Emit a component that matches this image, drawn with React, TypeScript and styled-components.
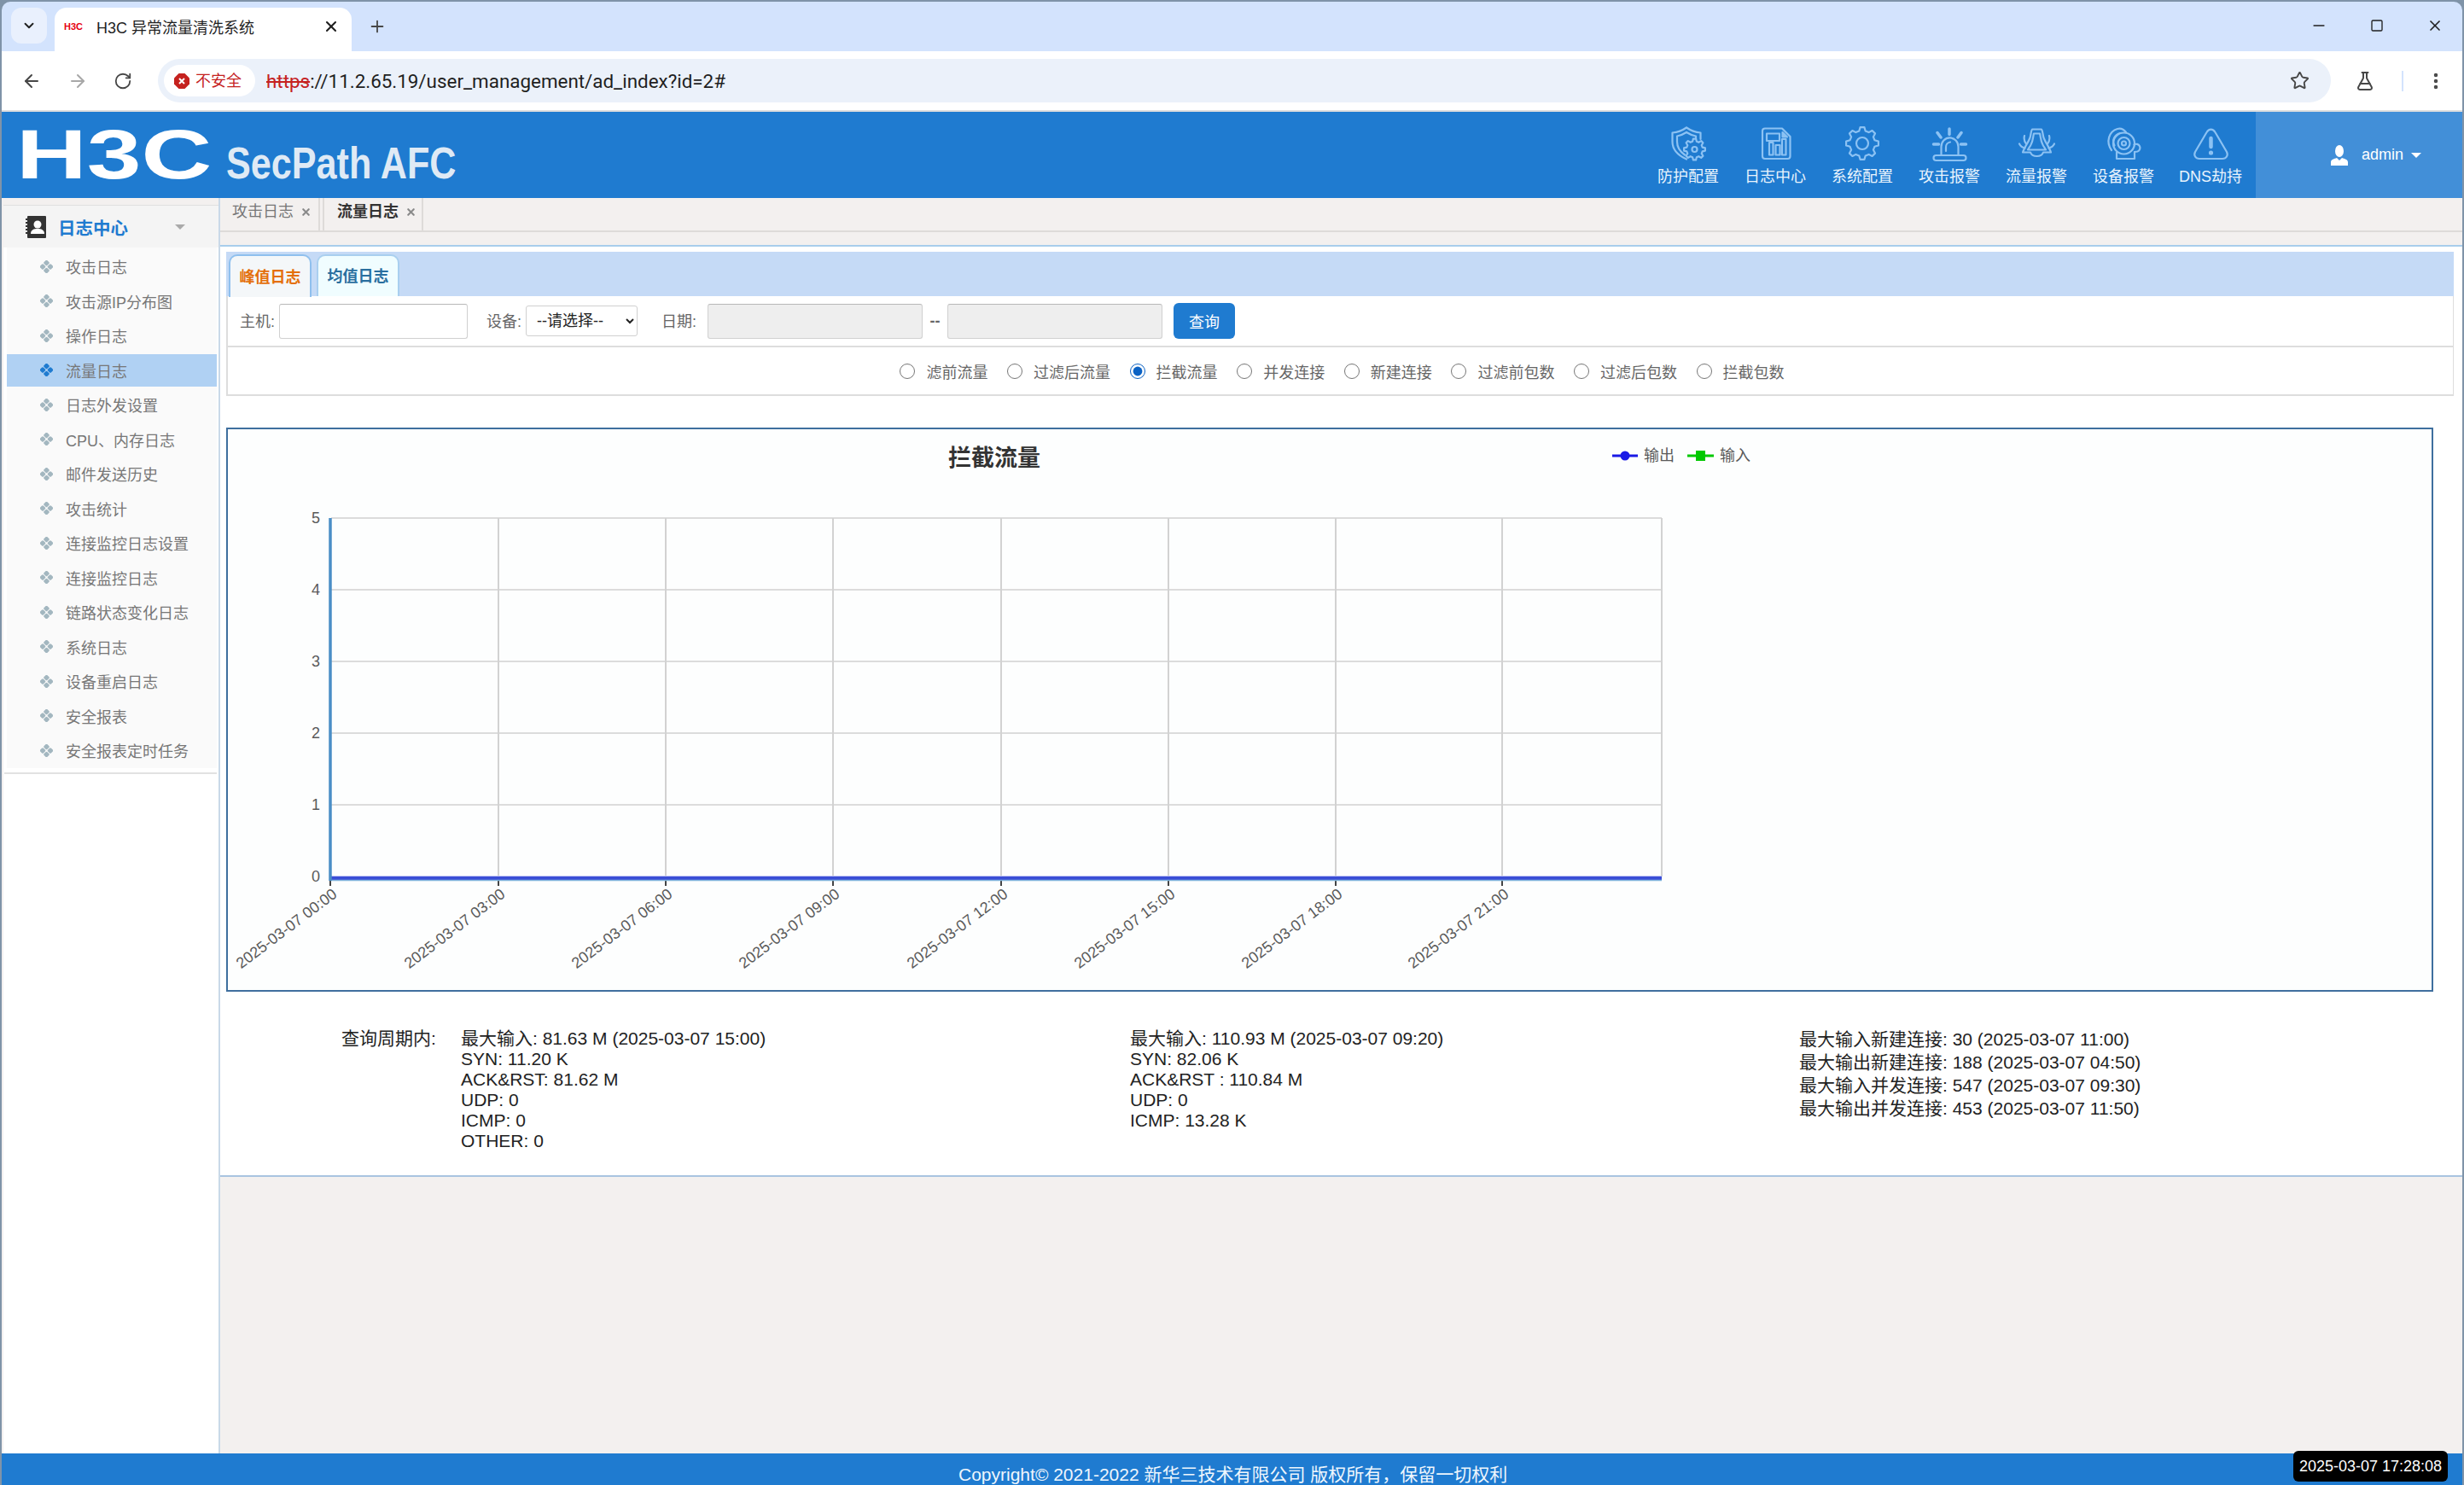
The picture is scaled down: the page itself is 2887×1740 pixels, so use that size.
import React from 'react';
import styled, { createGlobalStyle } from 'styled-components';
import { ArrowLeft, ArrowRight, RotateCw, Star, FlaskConical, EllipsisVertical, ChevronDown, X, Plus, Minus, Square } from 'lucide-react';

const GlobalStyle = createGlobalStyle`
  html, body { margin: 0; padding: 0; background: #7f93a8; }
  body { font-family: "Liberation Sans", "Noto Sans CJK SC", sans-serif; overflow: hidden; }
  * { box-sizing: border-box; }
`;

const Frame = styled.div`
  height: 1740px;
  padding: 2px 2px 0;
  display: flex;
  flex-direction: column;
  position: relative;
`;

/* ---------- browser chrome ---------- */
const TabStrip = styled.div`
  height: 58px;
  background: #d3e3fd;
  border-radius: 10px 10px 0 0;
  display: flex;
  align-items: flex-start;
  padding: 7px 0 0 11px;
  color: #1f1f1f;
`;

const TabListButton = styled.div`
  width: 42px;
  height: 42px;
  border-radius: 12px;
  background: #e9f0fd;
  display: flex;
  align-items: center;
  justify-content: center;
`;

const BrowserTab = styled.div`
  width: 348px;
  height: 51px;
  margin-left: 9px;
  background: #fff;
  border-radius: 14px 14px 0 0;
  display: flex;
  align-items: center;
  padding: 0 14px 8px 11px;
  font-size: 18px;
`;

const Favicon = styled.span`
  width: 38px;
  font-size: 11px;
  font-weight: bold;
  color: #e60012;
`;

const TabTitle = styled.span`
  flex: 1;
  white-space: nowrap;
`;

const NewTab = styled.div`
  margin: 11px 0 0 19px;
  line-height: 0;
`;

const WindowControls = styled.div`
  margin: 11px 0 0 auto;
  display: flex;
  align-items: center;
  gap: 50px;
  padding-right: 22px;
  line-height: 0;
`;

const Toolbar = styled.div`
  height: 71px;
  background: #fff;
  border-bottom: 2px solid #dedede;
  display: flex;
  align-items: flex-start;
  padding: 9px 0 0;
  color: #474747;
`;

const NavButtons = styled.div`
  width: 183px;
  height: 51px;
  padding-left: 23px;
  display: flex;
  align-items: center;
  gap: 30px;
`;

const Omnibox = styled.div`
  width: 2546px;
  height: 51px;
  flex: none;
  border-radius: 26px;
  background: #ebf1fa;
  display: flex;
  align-items: center;
  padding: 0 25px 0 7px;
`;

const SecurityChip = styled.div`
  width: 107px;
  height: 37px;
  flex: none;
  border-radius: 19px;
  background: #fff;
  display: flex;
  align-items: center;
  gap: 7px;
  padding-left: 12px;
  font-size: 18px;
  line-height: 20px;
  color: #c5221f;
  white-space: nowrap;
`;

const Url = styled.div`
  margin-left: 13px;
  font-size: 22.4px;
  font-family: "Roboto", sans-serif;
  color: #1f1f1f;
  flex: 1;
  white-space: nowrap;
`;

const UrlScheme = styled.span`
  color: #c5221f;
  text-decoration: line-through;
`;

const ToolbarEnd = styled.div`
  display: flex;
  align-items: center;
  height: 51px;
  line-height: 0;
  padding-left: 28px;
`;

const ToolbarDivider = styled.div`
  width: 2px;
  height: 24px;
  background: #d3e3fd;
  margin: 0 26px 0 31px;
`;

/* ---------- app header ---------- */
const Header = styled.header`
  height: 101px;
  background: #1f7bd0;
  display: flex;
`;

const Logo = styled.div`
  padding: 10px 0 0 17px;
  display: flex;
  align-items: baseline;
  font-weight: bold;
  line-height: 1;
  white-space: nowrap;
  font-family: "Liberation Sans", sans-serif;
`;

const LogoMark = styled.span`
  font-size: 81px;
  color: #fff;
  transform: scaleX(1.415);
  transform-origin: left;
  margin-right: 84px;
`;

const LogoName = styled.span`
  font-size: 52px;
  color: #dfeaf5;
  transform: scaleX(0.83);
  transform-origin: left;
`;

const TopNav = styled.nav`
  margin-left: auto;
  display: flex;
`;

const TopNavItem = styled.div`
  width: 102px;
  padding-top: 15px;
  display: flex;
  flex-direction: column;
  align-items: center;
  gap: 5px;
  color: #eaf4fd;
  font-size: 18px;
  line-height: 24px;
  white-space: nowrap;
  svg { width: 44px; height: 44px; fill: none; stroke: #8cc2f3; stroke-width: 2.2; stroke-linejoin: round; stroke-linecap: round; }
`;

const AdminBox = styled.div`
  width: 242px;
  margin-left: 2px;
  background: #428fd8;
  display: flex;
  align-items: center;
  padding: 0 0 0 88px;
  color: #fff;
  font-size: 18px;
`;

const AdminName = styled.span`
  margin: 0 9px 0 16px;
`;

const Caret = styled.span<{ $color: string; $size: number }>`
  display: block;
  width: 0;
  height: 0;
  border-left: ${p => p.$size}px solid transparent;
  border-right: ${p => p.$size}px solid transparent;
  border-top: ${p => p.$size}px solid ${p => p.$color};
`;

/* ---------- body ---------- */
const Main = styled.div`
  flex: 1;
  min-height: 0;
  display: flex;
  background: #f3f0ef;
`;

const Sidebar = styled.aside`
  width: 254px;
  flex: none;
  margin-left: 2px;
  padding-top: 8px;
  border-right: 2px solid #c9d9e8;
  display: flex;
  flex-direction: column;
`;

const SideHead = styled.div`
  height: 50px;
  flex: none;
  border-top: 1px solid #e0e0e0;
  background: #f4f4f4;
  display: flex;
  align-items: center;
  padding-left: 26px;
  font-size: 20.5px;
  font-weight: bold;
  color: #1f7bd0;
  gap: 14px;
`;

const SideCaret = styled.span`
  margin-left: 41px;
`;

const SideBody = styled.div`
  flex: 1;
  background: #fff;
`;

const SideList = styled.ul`
  list-style: none;
  margin: 0 0 0 4px;
  width: 246px;
  padding: 2px 0 0;
  background: #fafafa;
  height: 610px;
`;

const SideItem = styled.li`
  height: 40.5px;
  display: flex;
  align-items: center;
`;

const SideItemRow = styled.div<{ $active?: boolean }>`
  width: 100%;
  height: 38px;
  display: flex;
  align-items: center;
  gap: 15px;
  padding-left: 39px;
  font-size: 18px;
  color: #777;
  background: ${p => (p.$active ? '#b0d1f3' : 'transparent')};
  svg { width: 15px; height: 15px; flex: none; fill: ${p => (p.$active ? '#1f7bd0' : '#a3b7c0')}; }
`;

const SideRule = styled.div`
  height: 2px;
  margin: 5px 0 0 1px;
  width: 249px;
  background: #e2e2e2;
`;

const Content = styled.div`
  flex: 1;
  min-width: 0;
  display: flex;
  flex-direction: column;
`;

const PageTabs = styled.div`
  height: 40px;
  flex: none;
  margin-bottom: 15px;
  border-bottom: 2px solid #dedbd9;
  display: flex;
`;

const PageTab = styled.div<{ $active?: boolean }>`
  width: ${p => (p.$active ? 118 : 117)}px;
  height: 38px;
  padding: 4px 0 0 ${p => (p.$active ? 15 : 14)}px;
  display: flex;
  align-items: flex-start;
  gap: 8px;
  line-height: 24px;
  font-size: 18px;
  font-weight: ${p => (p.$active ? 'bold' : 'normal')};
  color: ${p => (p.$active ? '#333' : '#777')};
  border-right: 2px solid #dedbd9;
  & + & { margin-left: 3px; border-left: 2px solid #dedbd9; }
  svg { margin-top: 6px; color: #8a8a8a; }
`;

const Panel = styled.section`
  background: #fff;
  border-top: 2px solid #a8cdec;
  border-bottom: 2px solid #a9c4e0;
  padding: 6px 10px 0 7px;
  height: 1092px;
`;

const SubTabBar = styled.div`
  height: 52px;
  background: #c5daf6;
  display: flex;
  padding: 3px 0 0 3px;
  gap: 6px;
`;

const SubTab = styled.div<{ $active?: boolean }>`
  width: 97px;
  height: ${p => (p.$active ? 50 : 49)}px;
  padding-bottom: 3px;
  border: 2px solid ${p => (p.$active ? '#8fc0ee' : '#a9cfef')};
  border-bottom: 0;
  border-radius: 10px 10px 0 0;
  background: ${p => (p.$active ? '#f4f7f9' : '#f0fdff')};
  color: ${p => (p.$active ? '#e46f0a' : '#2a6f9f')};
  font-size: 18px;
  font-weight: bold;
  display: flex;
  align-items: center;
  justify-content: center;
`;

const FilterBox = styled.div`
  border: solid #ddd;
  border-width: 0 1px 2px 2px;
  height: 117px;
  display: flex;
  flex-direction: column;
`;

const FormRow = styled.div`
  height: 60px;
  border-bottom: 2px solid #ddd;
  display: flex;
  align-items: center;
  padding-left: 14px;
  font-size: 18px;
  color: #666;
`;

const FieldLabel = styled.label<{ $gap: number; $width: number }>`
  margin-left: ${p => p.$gap}px;
  margin-bottom: 3px;
  width: ${p => p.$width}px;
  white-space: nowrap;
`;

const TextInput = styled.input<{ $width: number }>`
  width: ${p => p.$width}px;
  height: 41px;
  border: 1px solid #d0d0d0;
  border-top-color: #b8b8b8;
  border-radius: 3px;
  background: #fff;
  padding: 0 8px;
  &:disabled { background: #eee; }
`;

const DeviceSelect = styled.select`
  width: 131px;
  height: 36px;
  border: 1px solid #d0d0d0;
  border-radius: 3px;
  background: #fff;
  padding-left: 8px;
  font-size: 18px;
  color: #222;
  font-family: "Liberation Sans", "Noto Sans CJK SC", sans-serif;
`;

const Dash = styled.span`
  width: 29px;
  text-align: center;
  font-weight: bold;
`;

const QueryButton = styled.button`
  width: 72px;
  height: 42px;
  margin-left: 13px;
  border: 0;
  border-radius: 6px;
  background: #1f7bd0;
  color: #fff;
  font-size: 18px;
  font-family: "Liberation Sans", "Noto Sans CJK SC", sans-serif;
`;

const RadioRow = styled.div`
  flex: 1;
  display: flex;
  align-items: center;
  justify-content: center;
  gap: 22.6px;
  padding-left: 4px;
  font-size: 18px;
  color: #666;
`;

const RadioLabel = styled.label`
  display: flex;
  align-items: center;
  gap: 13px;
  white-space: nowrap;
`;

const Radio = styled.input`
  width: 18px;
  height: 18px;
  margin: 0;
  accent-color: #0b62c4;
`;

const ChartBox = styled.div`
  margin: 37px 24px 0 0;
  height: 661px;
  border: 2px solid #3f6f9e;
  background: #fdfefe;
  line-height: 0;
`;

const ChartSvg = styled.svg`
  width: 2582px;
  height: 657px;
  font-family: "Liberation Sans", "Noto Sans CJK SC", sans-serif;
`;

const ChartTitle = styled.text`
  font-size: 27px;
  font-weight: bold;
  fill: #333;
`;

const ChartLabel = styled.text`
  font-size: 18px;
  fill: #5a5a5a;
`;

const Stats = styled.div`
  margin-top: 43px;
  padding-left: 135px;
  display: grid;
  grid-template-columns: 140px 784px 784px 1fr;
  font-size: 21px;
  color: #222;
`;

const StatColumn = styled.div<{ $lineHeight: number }>`
  line-height: ${p => p.$lineHeight}px;
  margin-top: ${p => (24 - p.$lineHeight) / 2}px;
  white-space: nowrap;
`;

const Footer = styled.footer`
  height: 37px;
  flex: none;
  background: #1f7bd0;
  color: #eef6fd;
  font-size: 21px;
  line-height: 37px;
  padding: 6px 0 0 1121px;
  overflow: hidden;
  white-space: nowrap;
`;

const Clock = styled.div`
  position: absolute;
  left: 2687px;
  top: 1700px;
  width: 181px;
  height: 36px;
  background: #000;
  border-radius: 6px;
  color: #fff;
  font-size: 18px;
  display: flex;
  align-items: center;
  justify-content: center;
`;

/* ---------- drawings ---------- */
const gearPath = (cx: number, cy: number, outer: number, inner: number, teeth: number) => {
  const points: string[] = [];
  const step = (Math.PI * 2) / teeth;
  for (let i = 0; i < teeth; i++) {
    const a = i * step - Math.PI / 2;
    const corners: [number, number][] = [
      [inner, a - step * 0.32],
      [outer, a - step * 0.16],
      [outer, a + step * 0.16],
      [inner, a + step * 0.32],
    ];
    corners.forEach(([r, t]) => {
      points.push(`${(cx + r * Math.cos(t)).toFixed(1)} ${(cy + r * Math.sin(t)).toFixed(1)}`);
    });
  }
  return `M${points.join('L')}z`;
};

const ShieldIcon = () => (
  <svg viewBox="0 0 44 44">
    <path d="M20 3.5C15 7 9 9 3.5 9.5V20C3.5 29 10 36 20 40.5M20 3.5C25 7 31 9 36.5 9.5V17" />
    <path d="M20 9C16 11.5 12 13 9 13.5V20C9 27 13 32 18 35.5M20 9C24 11.5 28 13 31 13.5V16" />
    <path d={gearPath(29.5, 29, 12.5, 9.5, 8)} />
    <circle cx="29.5" cy="29" r="3" />
  </svg>
);

const ReportIcon = () => (
  <svg viewBox="0 0 44 44">
    <path d="M10 4.5H30L39.5 14V37A3 3 0 0 1 36.5 40H10A3 3 0 0 1 7 37V7.5A3 3 0 0 1 10 4.5z" />
    <path d="M12 10.5H27V19H12zM15 21H19.5V35.5H15zM22.5 24H27.5V35.5H22.5zM30 17H34.5V35.5H30z" />
    <path d="M30.5 9L36 14.5H30.5z" fill="#8cc2f3" />
  </svg>
);

const GearIcon = () => (
  <svg viewBox="0 0 44 44">
    <path d={gearPath(22, 22, 19, 15, 8)} />
    <circle cx="22" cy="22" r="7" />
  </svg>
);

const SirenIcon = () => (
  <svg viewBox="0 0 44 44">
    <path d="M12.5 36V26A9.5 10 0 0 1 32.5 26V36" />
    <path d="M6.5 36H38.5A2 2 0 0 1 38.5 42H6.5A2 2 0 0 1 6.5 36z" />
    <path d="M18 31V27A6 6 0 0 1 23 20.5" />
    <path d="M22 5V11.5M8 9.5L12 15M36 9.5L32 15M3.5 23H9.5M35.5 23H41.5" strokeWidth="3.5" />
  </svg>
);

const BellIcon = () => (
  <svg viewBox="0 0 44 44">
    <path d="M17 5.5H28C30 8.5 29 12.5 31 16.5 33 21.5 37 26.5 39 32.5H30C28 38.5 17 38.5 15 32.5H6C8 26.5 12 21.5 14 16.5 16 12.5 15 8.5 17 5.5z" />
    <path d="M19 10.5H26C27 14.5 27 18.5 29 22.5 30 25.5 32 27.5 33 29.5H12C13 27.5 15 25.5 16 22.5 18 18.5 18 14.5 19 10.5z" />
    <path d="M8 13C7 17 8 20 10 22.5M37 13C38 17 37 20 35 22.5M2 22.5C3.5 25.5 6 27 8.5 27.5M43 22.5C41.5 25.5 39 27 36.5 27.5" />
  </svg>
);

const RingIcon = () => (
  <svg viewBox="0 0 44 44">
    <path d="M8 30C1 20 5 8 15 5C19 4 22 5 25 9" />
    <path d="M11.5 24.5C8.5 18.5 11 12 18 10" />
    <circle cx="22.5" cy="22" r="12.5" />
    <circle cx="22.5" cy="22" r="7" />
    <circle cx="22.5" cy="22" r="2.5" />
    <path d="M34.5 23.5A4.5 4.5 0 1 1 38.5 31.5L35 32" />
    <path d="M14 32.5V40H35V32" />
  </svg>
);

const AlertIcon = () => (
  <svg viewBox="0 0 44 44">
    <path d="M17.5 9C20 4.5 25 4.5 27.5 9L41 32C43 36 40.5 40 36 40H9C4.5 40 2 36 4 32z" />
    <path d="M22.5 16V26" strokeWidth="4.5" />
    <circle cx="22.5" cy="33" r="1.5" fill="#8cc2f3" />
  </svg>
);

const UserGlyph = styled.svg`
  width: 20px;
  height: 26px;
  flex: none;
  fill: #fff;
`;

const BookGlyph = styled.svg`
  width: 24px;
  height: 26px;
  flex: none;
`;

const ClusterIcon = () => (
  <svg viewBox="0 0 15 15">
    <rect x="4.75" y="0.25" width="5.5" height="5.5" rx="1.5" transform="rotate(45 7.5 3)" />
    <rect x="4.75" y="9.25" width="5.5" height="5.5" rx="1.5" transform="rotate(45 7.5 12)" />
    <rect x="0.25" y="4.75" width="5.5" height="5.5" rx="1.5" transform="rotate(45 3 7.5)" />
    <rect x="9.25" y="4.75" width="5.5" height="5.5" rx="1.5" transform="rotate(45 12 7.5)" />
  </svg>
);

const navItems = [
  { label: '防护配置', icon: <ShieldIcon /> },
  { label: '日志中心', icon: <ReportIcon /> },
  { label: '系统配置', icon: <GearIcon /> },
  { label: '攻击报警', icon: <SirenIcon /> },
  { label: '流量报警', icon: <BellIcon /> },
  { label: '设备报警', icon: <RingIcon /> },
  { label: 'DNS劫持', icon: <AlertIcon /> },
];

const sideItems = [
  '攻击日志', '攻击源IP分布图', '操作日志', '流量日志', '日志外发设置', 'CPU、内存日志', '邮件发送历史', '攻击统计',
  '连接监控日志设置', '连接监控日志', '链路状态变化日志', '系统日志', '设备重启日志', '安全报表', '安全报表定时任务',
];

const radios = ['滤前流量', '过滤后流量', '拦截流量', '并发连接', '新建连接', '过滤前包数', '过滤后包数', '拦截包数'];

const OX = 267;
const OY = 503;
const gridX = [584, 780, 976, 1173, 1369, 1565, 1760];
const gridY = [607, 691, 775, 859, 943];
const tickX = [387, ...gridX];
const times = ['00:00', '03:00', '06:00', '09:00', '12:00', '15:00', '18:00', '21:00'];

const TrafficChart = () => (
  <ChartSvg>
    <g transform={`translate(${-OX} ${-OY})`}>
      <ChartTitle x="1111" y="546">拦截流量</ChartTitle>
      <path d="M1889 534h30" stroke="#1a1ae6" strokeWidth="3" />
      <circle cx="1904" cy="534" r="5.5" fill="#1a1ae6" />
      <ChartLabel x="1926" y="540">输出</ChartLabel>
      <path d="M1977 534h31" stroke="#00c800" strokeWidth="3" />
      <rect x="1987" y="528" width="11" height="12" fill="#00c800" />
      <ChartLabel x="2015" y="540">输入</ChartLabel>

      {gridY.map(y => <path key={y} d={`M388 ${y}H1947`} stroke="#dcdcdc" strokeWidth="2" />)}
      {gridX.map(x => <path key={x} d={`M${x} 607V1027`} stroke="#d2d2d2" strokeWidth="2" />)}
      <path d="M1947 607V1027" stroke="#d2d2d2" strokeWidth="2" />
      {tickX.map(x => <path key={x} d={`M${x} 1031V1038`} stroke="#444" strokeWidth="2" />)}
      <path d="M387 1026.5H1947" stroke="#c3c6f5" strokeWidth="1" />
      <path d="M387 1029H1947" stroke="#3a4ed6" strokeWidth="4" />
      <path d="M387 1031.5H1947" stroke="#7fb2dc" strokeWidth="1.5" />
      <path d="M387 607V1032" stroke="#4a8ec6" strokeWidth="3.5" />

      {[5, 4, 3, 2, 1].map((n, i) => (
        <ChartLabel key={n} x="375" y={gridY[i] + 6} textAnchor="end">{n}</ChartLabel>
      ))}
      <ChartLabel x="375" y="1033" textAnchor="end">0</ChartLabel>
      {tickX.map((x, i) => (
        <ChartLabel key={x} x={x + 9} y="1050" textAnchor="end" transform={`rotate(-37 ${x + 9} 1050)`}>
          2025-03-07 {times[i]}
        </ChartLabel>
      ))}
    </g>
  </ChartSvg>
);

export default function App() {
  return (
    <>
      <GlobalStyle />
      <Frame>
        <TabStrip>
          <TabListButton><ChevronDown size={18} strokeWidth={2.5} /></TabListButton>
          <BrowserTab>
            <Favicon>H3C</Favicon>
            <TabTitle>H3C 异常流量清洗系统</TabTitle>
            <X size={20} strokeWidth={2.5} />
          </BrowserTab>
          <NewTab><Plus size={22} strokeWidth={2} color="#474747" /></NewTab>
          <WindowControls>
            <Minus size={20} strokeWidth={2} />
            <Square size={16} strokeWidth={2} />
            <X size={20} strokeWidth={2} />
          </WindowControls>
        </TabStrip>
        <Toolbar>
          <NavButtons>
            <ArrowLeft size={24} strokeWidth={2} />
            <ArrowRight size={24} strokeWidth={2} color="#a8a8a8" />
            <RotateCw size={22} strokeWidth={2} />
          </NavButtons>
          <Omnibox>
            <SecurityChip>
              <svg width="18" height="18" viewBox="0 0 18 18">
                <path d="M5.5 0h7L18 5.5v7L12.5 18h-7L0 12.5v-7z" fill="#c5221f" />
                <path d="M6 6l6 6M12 6l-6 6" stroke="#fff" strokeWidth="2" />
              </svg>
              不安全
            </SecurityChip>
            <Url><UrlScheme>https</UrlScheme>://11.2.65.19/user_management/ad_index?id=2#</Url>
            <Star size={23} strokeWidth={2} />
          </Omnibox>
          <ToolbarEnd>
            <FlaskConical size={24} strokeWidth={2} />
            <ToolbarDivider />
            <EllipsisVertical size={24} strokeWidth={2.5} />
          </ToolbarEnd>
        </Toolbar>

        <Header>
          <Logo>
            <LogoMark>H3C</LogoMark>
            <LogoName>SecPath AFC</LogoName>
          </Logo>
          <TopNav>
            {navItems.map(item => (
              <TopNavItem key={item.label}>
                {item.icon}
                {item.label}
              </TopNavItem>
            ))}
          </TopNav>
          <AdminBox>
            <UserGlyph viewBox="0 0 20 26">
              <ellipse cx="10" cy="8" rx="5" ry="7" />
              <path d="M0 25v-4c0-3 4-4 7-5l3 3 3-3c3 1 7 2 7 5v4z" />
            </UserGlyph>
            <AdminName>admin</AdminName>
            <Caret $color="#fff" $size={6} />
          </AdminBox>
        </Header>

        <Main>
          <Sidebar>
            <SideHead>
              <BookGlyph viewBox="0 0 24 26">
                <rect x="2" width="22" height="26" rx="1" fill="#333" />
                <path d="M0 4h4M0 8h4M0 12h4M0 16h4M0 20h4" stroke="#333" strokeWidth="2" />
                <circle cx="14" cy="10" r="4.5" fill="#fff" />
                <path d="M6 21c0-5 4-6 8-6s8 1 8 6z" fill="#fff" />
              </BookGlyph>
              日志中心
              <SideCaret><Caret $color="#aaa" $size={6} /></SideCaret>
            </SideHead>
            <SideBody>
              <SideList>
                {sideItems.map(label => (
                  <SideItem key={label}>
                    <SideItemRow $active={label === '流量日志'}>
                      <ClusterIcon />
                      {label}
                    </SideItemRow>
                  </SideItem>
                ))}
              </SideList>
              <SideRule />
            </SideBody>
          </Sidebar>

          <Content>
            <PageTabs>
              <PageTab>攻击日志<X size={13} strokeWidth={4} /></PageTab>
              <PageTab $active>流量日志<X size={13} strokeWidth={4} /></PageTab>
            </PageTabs>
            <Panel>
              <SubTabBar>
                <SubTab $active>峰值日志</SubTab>
                <SubTab>均值日志</SubTab>
              </SubTabBar>
              <FilterBox>
                <FormRow>
                  <FieldLabel $gap={0} $width={46}>主机:</FieldLabel>
                  <TextInput $width={221} />
                  <FieldLabel $gap={22} $width={46}>设备:</FieldLabel>
                  <DeviceSelect defaultValue="">
                    <option value="">--请选择--</option>
                  </DeviceSelect>
                  <FieldLabel $gap={28} $width={54}>日期:</FieldLabel>
                  <TextInput $width={252} disabled />
                  <Dash>--</Dash>
                  <TextInput $width={252} disabled />
                  <QueryButton>查询</QueryButton>
                </FormRow>
                <RadioRow>
                  {radios.map(label => (
                    <RadioLabel key={label}>
                      <Radio type="radio" name="metric" defaultChecked={label === '拦截流量'} />
                      {label}
                    </RadioLabel>
                  ))}
                </RadioRow>
              </FilterBox>
              <ChartBox>
                <TrafficChart />
              </ChartBox>
              <Stats>
                <StatColumn $lineHeight={24}>查询周期内:</StatColumn>
                <StatColumn $lineHeight={24}>
                  最大输入: 81.63 M (2025-03-07 15:00)<br />
                  SYN: 11.20 K<br />
                  ACK&amp;RST: 81.62 M<br />
                  UDP: 0<br />
                  ICMP: 0<br />
                  OTHER: 0
                </StatColumn>
                <StatColumn $lineHeight={24}>
                  最大输入: 110.93 M (2025-03-07 09:20)<br />
                  SYN: 82.06 K<br />
                  ACK&amp;RST : 110.84 M<br />
                  UDP: 0<br />
                  ICMP: 13.28 K
                </StatColumn>
                <StatColumn $lineHeight={27}>
                  最大输入新建连接: 30 (2025-03-07 11:00)<br />
                  最大输出新建连接: 188 (2025-03-07 04:50)<br />
                  最大输入并发连接: 547 (2025-03-07 09:30)<br />
                  最大输出并发连接: 453 (2025-03-07 11:50)
                </StatColumn>
              </Stats>
            </Panel>
          </Content>
        </Main>

        <Footer>Copyright© 2021-2022 新华三技术有限公司 版权所有，保留一切权利</Footer>
        <Clock>2025-03-07 17:28:08</Clock>
      </Frame>
    </>
  );
}
